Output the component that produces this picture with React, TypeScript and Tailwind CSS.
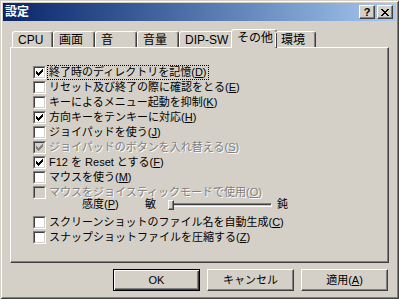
import React from "react";

type Item = {
  label: string;
  accel: string;
  checked?: boolean;
  disabled?: boolean;
  focus?: boolean;
};

const topItems: Item[] = [
  { label: "終了時のディレクトリを記憶", accel: "D", checked: true, focus: true },
  { label: "リセット及び終了の際に確認をとる", accel: "E" },
  { label: "キーによるメニュー起動を抑制", accel: "K" },
  { label: "方向キーをテンキーに対応", accel: "H", checked: true },
  { label: "ジョイパッドを使う", accel: "J" },
  { label: "ジョイパッドのボタンを入れ替える", accel: "S", checked: true, disabled: true },
  { label: "F12 を Reset とする", accel: "F", checked: true },
  { label: "マウスを使う", accel: "M" },
  { label: "マウスをジョイスティックモードで使用", accel: "O", disabled: true },
];

const bottomItems: Item[] = [
  { label: "スクリーンショットのファイル名を自動生成", accel: "C" },
  { label: "スナップショットファイルを圧縮する", accel: "Z" },
];

const tabs = [
  { name: "CPU", w: "w-[41px]" },
  { name: "画面", w: "w-[42px]" },
  { name: "音", w: "w-[42px]" },
  { name: "音量", w: "w-[42px]" },
  { name: "DIP-SW", w: "w-[54px]" },
  { name: "その他", w: "w-[46px]", active: true },
  { name: "環境", w: "w-[41px]" },
];

// classic 7x7 check mark
const CheckMark = ({ color }: { color: string }) => (
  <svg width="7" height="7" viewBox="0 0 7 7" shapeRendering="crispEdges" className="absolute left-[1px] top-[1px]">
    <path
      fill={color}
      d="M6 0h1v1h-1z M5 1h2v1h-2z M0 2h1v1h-1z M4 2h3v1h-3z M0 3h2v1h-2z M3 3h3v1h-3z M0 4h5v1h-5z M1 5h3v1h-3z M2 6h1v1h-1z"
    />
  </svg>
);

const Box = ({ checked, disabled }: { checked?: boolean; disabled?: boolean }) => (
  <span className="block w-[13px] h-[13px] shrink-0 border border-t-[#808080] border-l-[#808080] border-b-white border-r-white">
    <span
      className={`relative block w-full h-full border border-t-[#404040] border-l-[#404040] border-b-[#d4d0c8] border-r-[#d4d0c8] ${
        disabled ? "bg-[#d4d0c8]" : "bg-white"
      }`}
    >
      {checked && <CheckMark color={disabled ? "#808080" : "#000"} />}
    </span>
  </span>
);

const Row = ({ item }: { item: Item }) => (
  <div className="flex items-center h-[15px] gap-[1px]">
    <Box checked={item.checked} disabled={item.disabled} />
    <span
      className={`px-[1px] leading-[13px] border ${
        item.focus ? "border-dotted border-black" : "border-transparent"
      } ${item.disabled ? "text-[#808080] [text-shadow:1px_1px_0_#fff]" : "text-black"}`}
    >
      {item.label}(<u>{item.accel}</u>)
    </span>
  </div>
);

const Btn = ({ children, isDefault }: { children: React.ReactNode; isDefault?: boolean }) => (
  <button
    className={`w-[87px] h-[22px] bg-[#d4d0c8] text-[11px] text-black ${
      isDefault
        ? "border border-black shadow-[inset_1px_1px_0_#fff,inset_-1px_-1px_0_#404040,inset_-2px_-2px_0_#808080]"
        : "border border-t-white border-l-white border-b-[#404040] border-r-[#404040] shadow-[inset_-1px_-1px_0_#808080]"
    }`}
  >
    {children}
  </button>
);

const TitleBtn = ({ children }: { children: React.ReactNode }) => (
  <div className="w-[16px] h-[14px] bg-[#d4d0c8] flex items-center justify-center border border-t-white border-l-white border-b-[#404040] border-r-[#404040] shadow-[inset_-1px_-1px_0_#808080]">
    {children}
  </div>
);

export default function App() {
  return (
    <div className="w-[399px] h-[299px] bg-[#d4d0c8] p-[3px] flex flex-col font-['Liberation_Sans','Noto_Sans_CJK_JP',sans-serif] text-[11px] shadow-[inset_1px_1px_0_#d4d0c8,inset_-1px_-1px_0_#404040,inset_2px_2px_0_#fff,inset_-2px_-2px_0_#808080] overflow-hidden">
      {/* title bar */}
      <div className="h-[18px] flex items-center justify-between pl-[2px] pr-[3px] bg-gradient-to-r from-[#0a246a] to-[#a6caf0]">
        <span className="text-white font-bold text-[12px] leading-[18px]">設定</span>
        <div className="flex gap-[2px]">
          <TitleBtn>
            <span className="text-[11px] font-bold leading-none text-black">?</span>
          </TitleBtn>
          <TitleBtn>
            <svg width="8" height="7" viewBox="0 0 8 7" shapeRendering="crispEdges">
              <path
                fill="#000"
                d="M0 0h2v1h-2z M6 0h2v1h-2z M1 1h2v1h-2z M5 1h2v1h-2z M2 2h4v1h-4z M3 3h2v1h-2z M2 4h4v1h-4z M1 5h2v1h-2z M5 5h2v1h-2z M0 6h2v1h-2z M6 6h2v1h-2z"
              />
            </svg>
          </TitleBtn>
        </div>
      </div>

      {/* tabs + panel */}
      <div className="mt-[8px] mx-[7px] flex flex-col">
        <div className="h-[18px] flex items-end pl-[2px] relative z-10">
          {tabs.map((t) =>
            t.active ? (
              <div
                key={t.name}
                className={`${t.w} h-[19px] -mb-[1px] -mx-[2px] bg-[#d4d0c8] border-l border-t border-white border-r border-r-[#404040] rounded-t-[3px] shadow-[inset_-1px_0_0_#808080] pl-[5px] pt-[1px] text-[12px] leading-[14px] whitespace-nowrap`}
              >
                {t.name}
              </div>
            ) : (
              <div
                key={t.name}
                className={`${t.w} h-[16px] border-l border-t border-white border-r border-r-[#404040] rounded-t-[3px] shadow-[inset_-1px_0_0_#808080] pl-[5px] pt-[1px] text-[12px] leading-[14px] whitespace-nowrap`}
              >
                {t.name}
              </div>
            )
          )}
        </div>
        <div className="h-[216px] border border-t-white border-l-white border-b-[#404040] border-r-[#404040] shadow-[inset_-1px_-1px_0_#808080] pt-[17px] pl-[22px] flex flex-col">
          {topItems.map((it) => (
            <Row key={it.accel} item={it} />
          ))}
          {/* sensitivity slider */}
          <div className="flex items-center h-[9px] mb-[6px] pl-[49px]">
            <span className="w-[63px]">
              感度(<u>P</u>)
            </span>
            <span className="w-[23px]">敏</span>
            <div className="relative w-[104px] h-[10px]">
              <div className="absolute left-0 right-0 top-[3px] h-[4px] border border-t-[#808080] border-l-[#808080] border-b-white border-r-white shadow-[inset_1px_1px_0_#404040]" />
              <div className="absolute left-0 top-0 w-[6px] h-[10px] bg-[#d4d0c8] border border-t-white border-l-white border-b-[#404040] border-r-[#404040] shadow-[inset_-1px_-1px_0_#808080]" />
            </div>
            <span className="ml-[5px]">鈍</span>
          </div>
          {bottomItems.map((it) => (
            <Row key={it.accel} item={it} />
          ))}
        </div>
      </div>

      {/* buttons */}
      <div className="mt-[6px] flex justify-end gap-[7px] pr-[8px]">
        <Btn isDefault>OK</Btn>
        <Btn>キャンセル</Btn>
        <Btn>
          適用(<u>A</u>)
        </Btn>
      </div>
    </div>
  );
}
